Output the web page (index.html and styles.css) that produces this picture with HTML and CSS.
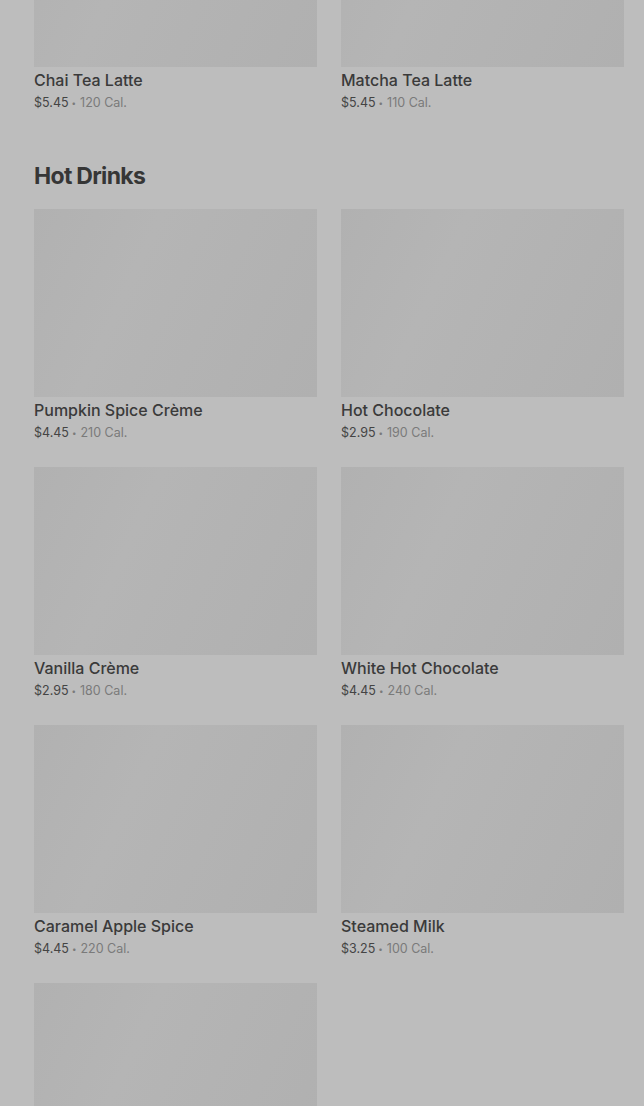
FILE: index.html
```html
<!DOCTYPE html>
<html lang="en">

<head>
	<meta charset="UTF-8">
	<meta name="viewport" content="width=device-width, initial-scale=1.0">
	<title>Menu</title>
	<link rel="stylesheet" href="styles.css">
</head>

<body>
	<div class="menu">
		<section class="group group-top">
			<ul class="grid">
				<li class="item">
					<div class="pic"></div>
					<p class="name">Chai Tea Latte</p>
					<p class="meta"><span class="price">$5.45</span><span class="dot">•</span>120 Cal.</p>
				</li>
				<li class="item">
					<div class="pic"></div>
					<p class="name">Matcha Tea Latte</p>
					<p class="meta"><span class="price">$5.45</span><span class="dot">•</span>110 Cal.</p>
				</li>
			</ul>
		</section>
		<section class="group">
			<h2 class="title">Hot Drinks</h2>
			<ul class="grid">
				<li class="item">
					<div class="pic"></div>
					<p class="name">Pumpkin Spice Crème</p>
					<p class="meta"><span class="price">$4.45</span><span class="dot">•</span>210 Cal.</p>
				</li>
				<li class="item">
					<div class="pic"></div>
					<p class="name">Hot Chocolate</p>
					<p class="meta"><span class="price">$2.95</span><span class="dot">•</span>190 Cal.</p>
				</li>
				<li class="item">
					<div class="pic"></div>
					<p class="name">Vanilla Crème</p>
					<p class="meta"><span class="price">$2.95</span><span class="dot">•</span>180 Cal.</p>
				</li>
				<li class="item">
					<div class="pic"></div>
					<p class="name">White Hot Chocolate</p>
					<p class="meta"><span class="price">$4.45</span><span class="dot">•</span>240 Cal.</p>
				</li>
				<li class="item">
					<div class="pic"></div>
					<p class="name">Caramel Apple Spice</p>
					<p class="meta"><span class="price">$4.45</span><span class="dot">•</span>220 Cal.</p>
				</li>
				<li class="item">
					<div class="pic"></div>
					<p class="name">Steamed Milk</p>
					<p class="meta"><span class="price">$3.25</span><span class="dot">•</span>100 Cal.</p>
				</li>
				<li class="item">
					<div class="pic"></div>
				</li>
			</ul>
		</section>
	</div>
</body>

</html>
```

FILE: styles.css
```css
* {
	padding: 0;
	margin: 0;
	list-style: none;
	box-sizing: border-box;
}

body {
	background: #bdbdbd;
	font-family: Inter, "Noto Sans", sans-serif;
	overflow: hidden;
}

.menu {
	padding: 0 20px 0 34px;
}

.group-top {
	margin-top: -121px;
}

.title {
	margin: 47px 0 17px;
	font-size: 23px;
	line-height: 32px;
	font-weight: 700;
	letter-spacing: -0.7px;
	color: #363636;
}

.grid {
	display: grid;
	grid-template-columns: 283px 283px;
	column-gap: 24px;
	row-gap: 24px;
}

.pic {
	height: 188px;
	background: linear-gradient(115deg, #b1b1b1 0%, #b5b5b5 35%, #b3b3b3 60%, #b0b0b0 100%);
}

.name {
	margin-top: 2px;
	font-size: 16px;
	line-height: 22px;
	font-weight: 500;
	color: #3a3a3a;
}

.meta {
	height: 22px;
	padding-top: 1px;
	font-size: 12.5px;
	line-height: 21px;
	color: #7a7a7a;
}

.price {
	color: #444;
}

.dot {
	margin: 0 4px 0 3px;
	font-size: 8px;
	vertical-align: 1px;
}
```
